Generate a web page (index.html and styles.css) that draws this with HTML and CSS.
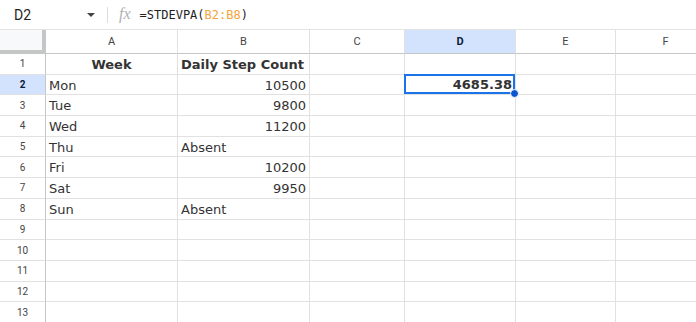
FILE: index.html
```html
<!DOCTYPE html>
<html lang="en">
<head>
  <meta charset="UTF-8" />
  <title>STDEVPA - Sheet</title>
  <link rel="stylesheet" href="styles.css">
</head>
<body>

  <div class="formula-bar">
    <div class="name-box">D2</div>
    <span class="caret"></span>
    <span class="divider"></span>
    <span class="fx">fx</span>
    <div class="formula">=STDEVPA(<span class="ref">B2:B8</span>)</div>
  </div>

  <div class="sheet">
    <div class="corner"></div>
    <div class="col-head">A</div>
    <div class="col-head">B</div>
    <div class="col-head">C</div>
    <div class="col-head active">D</div>
    <div class="col-head">E</div>
    <div class="col-head">F</div>

    <div class="row-head">1</div>
    <div class="cell bold center">Week</div>
    <div class="cell bold">Daily Step Count</div>
    <div class="cell"></div><div class="cell"></div><div class="cell"></div><div class="cell"></div>

    <div class="row-head active">2</div>
    <div class="cell">Mon</div>
    <div class="cell num">10500</div>
    <div class="cell"></div>
    <div class="cell num bold selected">4685.38<span class="handle"></span></div>
    <div class="cell"></div><div class="cell"></div>

    <div class="row-head">3</div>
    <div class="cell">Tue</div>
    <div class="cell num">9800</div>
    <div class="cell"></div><div class="cell"></div><div class="cell"></div><div class="cell"></div>

    <div class="row-head">4</div>
    <div class="cell">Wed</div>
    <div class="cell num">11200</div>
    <div class="cell"></div><div class="cell"></div><div class="cell"></div><div class="cell"></div>

    <div class="row-head">5</div>
    <div class="cell">Thu</div>
    <div class="cell">Absent</div>
    <div class="cell"></div><div class="cell"></div><div class="cell"></div><div class="cell"></div>

    <div class="row-head">6</div>
    <div class="cell">Fri</div>
    <div class="cell num">10200</div>
    <div class="cell"></div><div class="cell"></div><div class="cell"></div><div class="cell"></div>

    <div class="row-head">7</div>
    <div class="cell">Sat</div>
    <div class="cell num">9950</div>
    <div class="cell"></div><div class="cell"></div><div class="cell"></div><div class="cell"></div>

    <div class="row-head">8</div>
    <div class="cell">Sun</div>
    <div class="cell">Absent</div>
    <div class="cell"></div><div class="cell"></div><div class="cell"></div><div class="cell"></div>

    <div class="row-head">9</div>
    <div class="cell"></div><div class="cell"></div><div class="cell"></div><div class="cell"></div><div class="cell"></div><div class="cell"></div>
    <div class="row-head">10</div>
    <div class="cell"></div><div class="cell"></div><div class="cell"></div><div class="cell"></div><div class="cell"></div><div class="cell"></div>
    <div class="row-head">11</div>
    <div class="cell"></div><div class="cell"></div><div class="cell"></div><div class="cell"></div><div class="cell"></div><div class="cell"></div>
    <div class="row-head">12</div>
    <div class="cell"></div><div class="cell"></div><div class="cell"></div><div class="cell"></div><div class="cell"></div><div class="cell"></div>
    <div class="row-head">13</div>
    <div class="cell"></div><div class="cell"></div><div class="cell"></div><div class="cell"></div><div class="cell"></div><div class="cell"></div>
  </div>

</body>
</html>
```

FILE: styles.css
```css
html, body {
  margin: 0;
  background: #fff;
  overflow: hidden;
}
body {
  font-family: "DejaVu Sans", Verdana, sans-serif;
  color: #333;
}
.formula-bar {
  display: flex;
  align-items: center;
  height: 29px;
  border-bottom: 1px solid #e3e3e3;
}
.name-box {
  width: 72px;
  padding-left: 14px;
  font-family: Roboto, "Liberation Sans", sans-serif;
  font-size: 14px;
  color: #1f1f1f;
}
.caret {
  width: 0;
  height: 0;
  border-left: 4px solid transparent;
  border-right: 4px solid transparent;
  border-top: 4px solid #444;
  margin-left: 1px;
}
.divider {
  width: 1px;
  height: 16px;
  background: #dadce0;
  margin-left: 12px;
}
.fx {
  font-family: "Liberation Serif", serif;
  font-style: italic;
  font-size: 16px;
  color: #b0b0b0;
  margin-left: 11px;
  margin-top: -2px;
}
.formula {
  margin-left: 9px;
  font-family: "DejaVu Sans Mono", monospace;
  font-size: 12px;
  color: #1f1f1f;
}
.ref {
  color: #f4a43a;
}
.sheet {
  display: grid;
  grid-template-columns: 46px 132px 132px 95px 111px 100px 100px;
  grid-template-rows: 24px repeat(13, 20.7px);
}
.corner {
  background: #f8f9fa;
  border-right: 4px solid #c4c7c5;
  border-bottom: 4px solid #c4c7c5;
}
.col-head {
  display: flex;
  align-items: center;
  justify-content: center;
  font-family: Roboto, "Liberation Sans", sans-serif;
  font-size: 11px;
  color: #444;
  border-right: 1px solid #e1e1e1;
  border-bottom: 1px solid #c4c7c5;
}
.row-head {
  display: flex;
  align-items: center;
  justify-content: center;
  font-family: Roboto, "Liberation Sans", sans-serif;
  font-size: 10px;
  color: #444;
  border-right: 1px solid #c4c7c5;
  border-bottom: 1px solid #e1e1e1;
}
.col-head.active, .row-head.active {
  background: #d3e3fd;
  color: #0b1b3a;
  font-weight: bold;
}
.cell {
  position: relative;
  display: flex;
  align-items: center;
  padding: 1px 3px 0;
  font-size: 13px;
  white-space: nowrap;
  border-right: 1px solid #e1e1e1;
  border-bottom: 1px solid #e1e1e1;
}
.bold {
  font-weight: bold;
}
.center {
  justify-content: center;
}
.num {
  justify-content: flex-end;
}
.selected {
  box-shadow: inset 0 0 0 2px #1a73e8;
  margin: -1px 0 0 -1px;
}
.handle {
  position: absolute;
  right: -4px;
  bottom: -4px;
  width: 7px;
  height: 7px;
  border-radius: 50%;
  background: #0b57d0;
  border: 1px solid #fff;
  z-index: 2;
}
```
